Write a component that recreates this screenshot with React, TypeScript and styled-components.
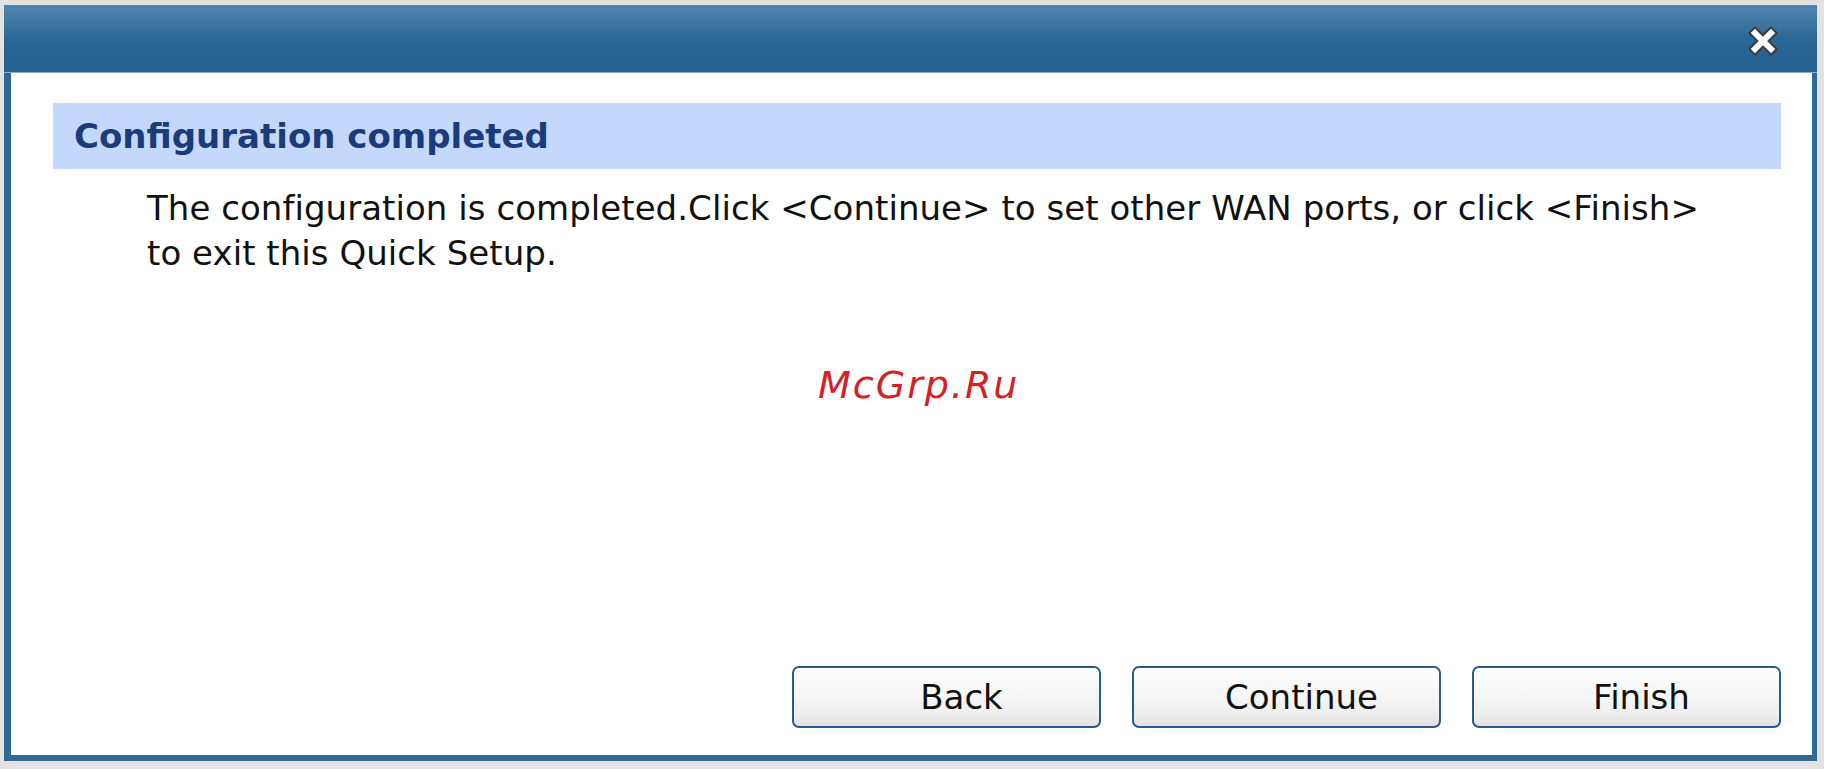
import React from "react";
import styled, { createGlobalStyle } from "styled-components";

const GlobalStyle = createGlobalStyle`
  html, body {
    margin: 0;
    padding: 0;
    background: #e2e2e2;
  }
  body {
    font-family: "DejaVu Sans", Verdana, sans-serif;
  }
`;

const Page = styled.div`
  width: 1824px;
  height: 769px;
  box-sizing: border-box;
  padding: 5px 7px 8px 4px;
  background: #e2e2e2;
`;

const Dialog = styled.div`
  position: relative;
  width: 1813px;
  height: 756px;
  display: flex;
  flex-direction: column;
`;

const TitleBar = styled.div`
  height: 68px;
  box-sizing: border-box;
  flex: none;
  display: flex;
  align-items: center;
  justify-content: flex-end;
  padding: 0 39px 0 0;
  border-bottom: 1px solid #8fb0cc;
  background: linear-gradient(
    to bottom,
    #5084ae 0%,
    #3f78a4 25%,
    #2b6897 50%,
    #266393 70%,
    #256290 100%
  );
`;

const CloseButton = styled.button`
  width: 30px;
  height: 30px;
  padding: 0;
  margin-top: 5px;
  border: none;
  background: transparent;
  display: flex;
  align-items: center;
  justify-content: center;
  cursor: pointer;
`;

const Body = styled.div`
  flex: 1;
  display: flex;
  flex-direction: column;
  background: #ffffff;
  border-left: 7px solid #2f6997;
  border-right: 5px solid #2f6997;
  border-bottom: 6px solid #2f6997;
  padding: 30px 31px 27px 42px;
`;

const SectionHeader = styled.div`
  height: 66px;
  flex: none;
  background: #c4d8fb;
  padding-left: 21px;
  font-family: "DejaVu Sans", Verdana, sans-serif;
  font-weight: bold;
  font-size: 34px;
  line-height: 66px;
  color: #1c3b7b;
  white-space: nowrap;
`;

const Description = styled.p`
  margin: 17px 0 0 94px;
  font-family: "DejaVu Sans", Verdana, sans-serif;
  font-size: 34px;
  line-height: 45px;
  letter-spacing: 0.05px;
  color: #111111;
  white-space: nowrap;
`;

const Spacer = styled.div`
  flex: 1;
`;

const ButtonRow = styled.div`
  display: flex;
  justify-content: flex-end;
  gap: 31px;
`;

const DialogButton = styled.button`
  width: 309px;
  height: 62px;
  box-sizing: border-box;
  border: 2px solid #285c8e;
  border-radius: 7px;
  padding: 0 0 0 30px;
  background: linear-gradient(
    to bottom,
    #fefefe 0%,
    #f6f6f6 45%,
    #efefef 75%,
    #e2e2e2 100%
  );
  box-shadow: inset 0 1px 0 #ffffff;
  font-family: "DejaVu Sans", Verdana, sans-serif;
  font-size: 34px;
  line-height: 58px;
  color: #111111;
  text-align: center;
  cursor: pointer;
`;

const Watermark = styled.div`
  position: absolute;
  left: 814px;
  top: 361px;
  font-family: "DejaVu Sans", Verdana, sans-serif;
  font-style: oblique;
  font-size: 38px;
  line-height: 38px;
  letter-spacing: 2px;
  color: #d42027;
  pointer-events: none;
`;

const CloseIcon = () => (
  <svg width="30" height="30" viewBox="0 0 30 30">
    <path
      d="M7 7 L23 23 M23 7 L7 23"
      stroke="#3c3c3c"
      strokeWidth="10"
      strokeLinecap="square"
      fill="none"
    />
    <path
      d="M7 7 L23 23 M23 7 L7 23"
      stroke="#ffffff"
      strokeWidth="6"
      strokeLinecap="square"
      fill="none"
    />
  </svg>
);

export default function App() {
  return (
    <>
      <GlobalStyle />
      <Page>
        <Dialog>
          <TitleBar>
            <CloseButton aria-label="Close">
              <CloseIcon />
            </CloseButton>
          </TitleBar>
          <Body>
            <SectionHeader>Configuration completed</SectionHeader>
            <Description>
              The configuration is completed.Click &lt;Continue&gt; to set other WAN ports, or click &lt;Finish&gt;
              <br />
              to exit this Quick Setup.
            </Description>
            <Spacer />
            <ButtonRow>
              <DialogButton>Back</DialogButton>
              <DialogButton>Continue</DialogButton>
              <DialogButton>Finish</DialogButton>
            </ButtonRow>
          </Body>
          <Watermark>McGrp.Ru</Watermark>
        </Dialog>
      </Page>
    </>
  );
}
